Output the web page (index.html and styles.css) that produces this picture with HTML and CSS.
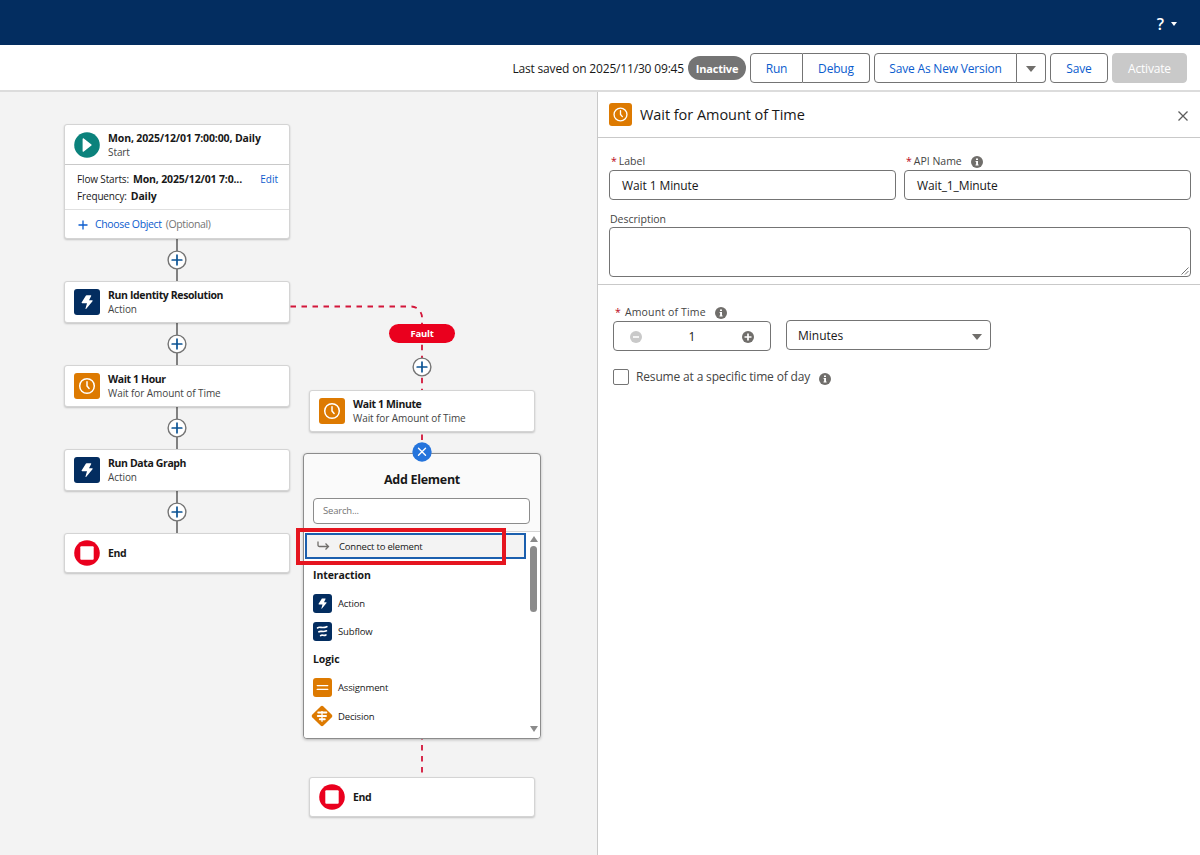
FILE: index.html
```html
<!DOCTYPE html>
<html lang="en">
<head>
  <meta charset="UTF-8">
  <title>Flow Builder</title>
  <meta name="viewport" content="width=device-width, initial-scale=1.0">
  <link rel="stylesheet" href="styles.css">
</head>
<body>
  <svg class="defs" width="0" height="0">
    <symbol id="bolt" viewBox="0 0 26 26">
      <path fill="#fff" d="M12.6 6.2h4.2c.4 0 .6.3.4.7l-2.2 4.4h3c.6 0 .8.5.5.9l-6.2 7.6c-.4.5-1 .2-.8-.4l1.5-5.2H8.2c-.5 0-.7-.4-.6-.8l4.2-6.7c.2-.3.4-.5.8-.5z"/>
    </symbol>
    <symbol id="clock" viewBox="0 0 26 26">
      <circle cx="13" cy="13" r="7.3" fill="none" stroke="#fff" stroke-width="1.5"/>
      <path fill="none" stroke="#fff" stroke-width="1.5" stroke-linecap="round" stroke-linejoin="round" d="M13 8.8V13l2.100 2.400"/>
    </symbol>
    <symbol id="info" viewBox="0 0 12 12">
      <circle cx="6" cy="6" r="6" fill="#706e6b"/>
      <path fill="#fff" d="M5 2.5h2v1.600H5zM4.600 5.100H7v3.300h.6v1H4.500v-1h.6V6h-.5z"/>
    </symbol>
    <symbol id="plus" viewBox="0 0 20 20">
      <circle cx="10" cy="10" r="8.9" fill="#fff" stroke="#747474" stroke-width="1.4"/>
      <path fill="none" stroke="#0b5394" stroke-width="1.7" stroke-linecap="round" d="M10 5.200v9.600M5.200 10h9.600"/>
    </symbol>
  </svg>

  <header class="topbar">
    <span class="help">?</span>
    <span class="help-caret"></span>
  </header>

  <div class="toolbar">
    <span class="saved">Last saved on 2025/11/30 09:45</span>
    <span class="status">Inactive</span>
    <div class="btn-group">
      <button class="btn run">Run</button>
      <button class="btn debug">Debug</button>
    </div>
    <div class="btn-group">
      <button class="btn save-as">Save As New Version</button>
      <button class="btn more"><span class="caret"></span></button>
    </div>
    <button class="btn save">Save</button>
    <button class="btn activate" disabled>Activate</button>
  </div>

  <div class="main">
    <div class="canvas">
      <svg class="edges" width="597" height="763">
        <path class="edge" d="M177 146V442"/>
        <path class="edge-fault" d="M290.500 214.500H411a11 11 0 0 1 11 11V300"/>
        <path class="edge-fault" d="M422 342.500V362"/>
        <path class="edge-fault" d="M422 642V681"/>
      </svg>

      <div class="node start">
        <div class="node-head">
          <svg class="node-icon" viewBox="0 0 26 26"><circle cx="13" cy="13" r="12.8" fill="#0b827c"/><path fill="#fff" d="M8.600 7.200c0-.8.7-1.100 1.200-.7l7.600 6c.4.3.4.8 0 1.100l-7.600 6c-.5.4-1.200.1-1.200-.7z"/></svg>
          <div class="node-text"><b>Mon, 2025/12/01 7:00:00, Daily</b><span>Start</span></div>
        </div>
        <div class="schedule">
          <div class="line"><span>Flow Starts:</span><b>Mon, 2025/12/01 7:0...</b><a class="edit">Edit</a></div>
          <div class="line"><span>Frequency:</span><b>Daily</b></div>
        </div>
        <div class="choose">
          <svg width="10" height="10" viewBox="0 0 10 10"><path stroke="#0b5cce" stroke-width="1.3" d="M5 .5v9M.5 5h9"/></svg>
          <a>Choose Object</a><span>(Optional)</span>
        </div>
      </div>

      <div class="node resolution">
        <svg class="node-icon action"><use href="#bolt"/></svg>
        <div class="node-text"><b>Run Identity Resolution</b><span>Action</span></div>
      </div>
      <div class="node wait-hour">
        <svg class="node-icon logic"><use href="#clock"/></svg>
        <div class="node-text"><b>Wait 1 Hour</b><span>Wait for Amount of Time</span></div>
      </div>
      <div class="node data-graph">
        <svg class="node-icon action"><use href="#bolt"/></svg>
        <div class="node-text"><b>Run Data Graph</b><span>Action</span></div>
      </div>
      <div class="node end end-main">
        <svg class="node-icon" viewBox="0 0 26 26"><circle cx="13" cy="13" r="12.8" fill="#ea001e"/><rect x="6.300" y="6.300" width="13.400" height="13.400" rx="1" fill="#fff"/></svg>
        <div class="node-text"><b>End</b></div>
      </div>
      <div class="node wait-minute">
        <svg class="node-icon logic"><use href="#clock"/></svg>
        <div class="node-text"><b>Wait 1 Minute</b><span>Wait for Amount of Time</span></div>
      </div>
      <div class="node end end-fault">
        <svg class="node-icon" viewBox="0 0 26 26"><circle cx="13" cy="13" r="12.8" fill="#ea001e"/><rect x="6.300" y="6.300" width="13.400" height="13.400" rx="1" fill="#fff"/></svg>
        <div class="node-text"><b>End</b></div>
      </div>

      <svg class="add add-1"><use href="#plus"/></svg>
      <svg class="add add-2"><use href="#plus"/></svg>
      <svg class="add add-3"><use href="#plus"/></svg>
      <svg class="add add-4"><use href="#plus"/></svg>
      <svg class="add add-fault"><use href="#plus"/></svg>
      <span class="fault">Fault</span>

      <div class="popover">
        <h2>Add Element</h2>
        <div class="search">Search...</div>
        <div class="list-wrap">
          <div class="list">
            <div class="connect">
              <svg width="13" height="10" viewBox="0 0 13 10"><path fill="none" stroke="#706e6b" stroke-width="1.300" d="M1 .5v3.500Q1 5.500 2.500 5.500H11.500M8.500 2.500l3 3-3 3"/></svg>
              <span>Connect to element</span>
            </div>
            <h3>Interaction</h3>
            <div class="item"><svg class="item-icon action"><use href="#bolt"/></svg>Action</div>
            <div class="item">
              <svg class="item-icon action" viewBox="0 0 20 20"><path fill="none" stroke="#fff" stroke-width="1.700" stroke-linecap="round" d="M4.800 6.200c2.500-2 4.400 1.200 9.800-1.300M6.200 10.300c2.200-1.500 4 .9 8-1M8 14.300c2-1.300 3 .6 5.600-.7"/></svg>Subflow
            </div>
            <h3 class="second">Logic</h3>
            <div class="item">
              <svg class="item-icon logic" viewBox="0 0 20 20"><path fill="none" stroke="#fff" stroke-width="1.500" stroke-linecap="round" d="M4.500 8h11M4.500 12h11"/></svg>Assignment
            </div>
            <div class="item">
              <svg class="item-icon decision" viewBox="0 0 22 22"><rect x="3.200" y="3.200" width="15.600" height="15.600" rx="2" transform="rotate(45 11 11)" fill="#dd7a01"/><path fill="none" stroke="#fff" stroke-width="1.900" stroke-linecap="round" d="M7.200 7.500h8.200M6.800 11h8.200M8.800 14.300h5"/><path stroke="#fff" stroke-width="1.300" d="M11 6v10.800"/></svg>Decision
            </div>
          </div>
          <div class="scrollbar"><span class="up"></span><span class="thumb"></span><span class="down"></span></div>
        </div>
      </div>
      <svg class="close-add" viewBox="0 0 20 20"><circle cx="10" cy="10" r="9.700" fill="#2574dc"/><path stroke="#fff" stroke-width="1.400" stroke-linecap="round" d="M6.500 6.300l7 7M13.500 6.300l-7 7"/></svg>
      <div class="highlight"></div>
    </div>

    <aside class="panel">
      <div class="panel-head">
        <svg class="panel-icon logic"><use href="#clock"/></svg>
        <h1>Wait for Amount of Time</h1>
        <svg class="close" width="10" height="10" viewBox="0 0 10 10"><path stroke="#5c5c5c" stroke-width="1.300" d="M.5.5l9 9M9.500.5l-9 9"/></svg>
      </div>
      <div class="details">
        <div class="row">
          <div class="field">
            <label><i>*</i>Label</label>
            <div class="input">Wait 1 Minute</div>
          </div>
          <div class="field">
            <label><i>*</i>API Name<svg class="info"><use href="#info"/></svg></label>
            <div class="input">Wait_1_Minute</div>
          </div>
        </div>
        <div class="field">
          <label class="desc">Description</label>
          <div class="textarea">
            <svg width="8" height="8" viewBox="0 0 8 8"><path stroke="#747474" stroke-width="1" d="M.5 7.500l7-7M4 7.500 7.500 4"/></svg>
          </div>
        </div>
      </div>
      <div class="timing">
        <label class="amount"><i>*</i>Amount of Time<svg class="info"><use href="#info"/></svg></label>
        <div class="controls">
          <div class="stepper">
            <svg width="12" height="12" viewBox="0 0 12 12"><circle cx="6" cy="6" r="6" fill="#c9c9c9"/><path stroke="#fff" stroke-width="1.600" d="M3 6h6"/></svg>
            <span>1</span>
            <svg width="12" height="12" viewBox="0 0 12 12"><circle cx="6" cy="6" r="6" fill="#706e6b"/><path stroke="#fff" stroke-width="1.700" d="M2.500 6h7M6 2.500v7"/></svg>
          </div>
          <div class="select">Minutes<span class="caret"></span></div>
        </div>
        <div class="resume">
          <span class="checkbox"></span>
          <span class="resume-text">Resume at a specific time of day</span>
          <svg class="info"><use href="#info"/></svg>
        </div>
      </div>
    </aside>
  </div>
</body>
</html>
```

FILE: styles.css
```css
* {
  box-sizing: border-box;
}
body {
  margin: 0;
  height: 855px;
  overflow: hidden;
  display: flex;
  flex-direction: column;
  font-family: "Open Sans", "Noto Sans", sans-serif;
  font-size: 12px;
  color: #181818;
  background: white;
}
h1, h2, h3 {
  margin: 0;
}
svg {
  flex: none;
}
.defs {
  position: absolute;
}
.topbar {
  height: 45px;
  flex: none;
  background: #032d60;
  display: flex;
  align-items: center;
  justify-content: flex-end;
  gap: 7px;
  padding: 2px 23px 0 0;
}
.help {
  color: white;
  font-size: 16px;
  font-weight: 600;
}
.help-caret {
  border: 3px solid transparent;
  border-top: 4px solid white;
  border-bottom: 0;
}
.toolbar {
  height: 47px;
  flex: none;
  display: flex;
  align-items: center;
  justify-content: flex-end;
  gap: 4px;
  padding-right: 13px;
  border-bottom: 2px solid #dcdcdc;
}
.saved {
  letter-spacing: -0.17px;
  padding-top: 2px;
}
.status {
  width: 58px;
  height: 24px;
  line-height: 25px;
  border-radius: 12px;
  background: #747474;
  color: white;
  font-size: 11px;
  font-weight: 700;
  letter-spacing: -0.2px;
  text-align: center;
}
.btn-group {
  display: flex;
}
.btn {
  height: 30px;
  padding: 1px 0 0;
  border: 1px solid #747474;
  border-radius: 4px;
  background: white;
  color: #0b5cce;
  font-family: inherit;
  font-size: 12px;
  letter-spacing: -0.18px;
}
.btn-group .btn:first-child {
  border-radius: 4px 0 0 4px;
}
.btn-group .btn:last-child {
  border-radius: 0 4px 4px 0;
  border-left: 0;
}
.run {
  width: 53px;
}
.debug {
  width: 67px;
}
.save-as {
  width: 143px;
}
.more {
  width: 29px;
  padding-top: 3px;
  display: flex;
  align-items: center;
  justify-content: center;
}
.save {
  width: 58px;
}
.activate {
  width: 75px;
  background: #c9c9c9;
  border-color: #c9c9c9;
  color: white;
}
.caret {
  border: 5px solid transparent;
  border-top: 6px solid #706e6b;
  border-bottom: 0;
}
.main {
  flex: 1;
  display: flex;
}
.canvas {
  position: relative;
  width: 597px;
  background: #f3f3f3;
}
.edges {
  position: absolute;
  top: 0;
  left: 0;
}
.edge {
  fill: none;
  stroke: #747474;
  stroke-width: 1.8;
}
.edge-fault {
  fill: none;
  stroke: #d3163a;
  stroke-width: 1.8;
  stroke-dasharray: 5.5 5.5;
}

/* flow nodes */
.node {
  position: absolute;
  left: 64px;
  width: 226px;
  height: 42px;
  padding-left: 10px;
  display: flex;
  align-items: center;
  gap: 8px;
  background: white;
  border: 1px solid #d4d4d4;
  border-radius: 3px;
  box-shadow: 0 1px 2px rgba(0, 0, 0, 0.2);
}
.node-icon {
  width: 26px;
  height: 26px;
  margin-left: -1px;
  border-radius: 3px;
}
.action {
  background: #032d60;
}
.logic {
  background: #dd7a01;
}
.node-text {
  display: flex;
  flex-direction: column;
  font-size: 10px;
  line-height: 14px;
}
.node-text b {
  font-size: 10.5px;
  letter-spacing: -0.38px;
}
.node-text span {
  color: #444;
  letter-spacing: -0.08px;
}
.start {
  top: 32px;
  height: 115px;
  padding: 0;
  display: block;
}
.start .node-text b {
  letter-spacing: -0.13px;
}
.node-head {
  height: 40px;
  padding-left: 10px;
  display: flex;
  align-items: center;
  gap: 8px;
  border-bottom: 1px solid #c9c9c9;
}
.schedule {
  height: 45px;
  padding: 6px 11px 0 12px;
  border-bottom: 1px solid #e0e0e0;
}
.line {
  display: flex;
  gap: 4px;
  font-size: 10px;
  line-height: 17px;
}
.line span {
  letter-spacing: -0.15px;
}
.line b {
  font-size: 10.5px;
  letter-spacing: -0.15px;
}
a {
  color: #0b5cce;
}
.edit {
  margin-left: auto;
}
.choose {
  display: flex;
  align-items: center;
  height: 27px;
  padding-left: 13px;
  font-size: 10.5px;
  letter-spacing: -0.35px;
}
.choose svg {
  margin-top: 2px;
}
.choose a {
  margin-left: 7px;
}
.choose span {
  margin-left: 4px;
  color: #747474;
}
.resolution {
  top: 189px;
}
.wait-hour {
  top: 273px;
}
.data-graph {
  top: 357px;
}
.end {
  height: 40px;
}
.end-main {
  top: 441px;
}
.wait-minute {
  left: 309px;
  top: 298px;
}
.end-fault {
  left: 309px;
  top: 685px;
}
.add {
  position: absolute;
  left: 167px;
  width: 20px;
  height: 20px;
}
.add-1 {
  top: 158px;
}
.add-2 {
  top: 242px;
}
.add-3 {
  top: 326px;
}
.add-4 {
  top: 410px;
}
.add-fault {
  left: 412px;
  top: 265px;
}
.fault {
  position: absolute;
  left: 389px;
  top: 232px;
  width: 66px;
  height: 19px;
  line-height: 20px;
  border-radius: 10px;
  background: #ea001e;
  color: white;
  font-size: 9.5px;
  font-weight: 700;
  letter-spacing: -0.2px;
  text-align: center;
}

/* add element menu */
.popover {
  position: absolute;
  left: 303px;
  top: 361px;
  width: 238px;
  height: 286px;
  display: flex;
  flex-direction: column;
  background: #fafafa;
  border: 1px solid #8c8c8c;
  border-radius: 4px;
  box-shadow: 0 1px 3px rgba(0, 0, 0, 0.25);
  overflow: hidden;
}
.popover h2 {
  margin-top: 16px;
  font-size: 12.5px;
  line-height: 20px;
  letter-spacing: -0.3px;
  text-align: center;
}
.search {
  height: 26px;
  margin: 8px 10px 7px 9px;
  padding-left: 9px;
  line-height: 24px;
  font-size: 9.5px;
  letter-spacing: -0.2px;
  color: #747474;
  background: white;
  border: 1px solid #8c8c8c;
  border-radius: 4px;
}
.list-wrap {
  flex: 1;
  display: flex;
  background: white;
  border-top: 1px solid #d4d4d4;
}
.list {
  width: 224px;
}
.connect {
  height: 26px;
  margin: 1px 2px 0 1px;
  padding-left: 10px;
  display: flex;
  align-items: center;
  gap: 9px;
  font-size: 9.5px;
  letter-spacing: -0.2px;
  background: #f3f3f3;
  border: 2px solid #1b5fae;
}
.list h3 {
  height: 30px;
  padding-left: 9px;
  font-size: 10.5px;
  line-height: 32px;
  letter-spacing: -0.1px;
}
.list .second {
  height: 28px;
  line-height: 27px;
}
.item {
  height: 28.4px;
  padding-left: 9px;
  display: flex;
  align-items: center;
  gap: 6px;
  font-size: 9.5px;
  letter-spacing: -0.15px;
}
.item-icon {
  width: 19px;
  height: 19px;
  border-radius: 3px;
}
.decision {
  width: 22px;
  height: 22px;
  margin: 0 -1px 0 -2px;
}
.scrollbar {
  width: 11px;
  display: flex;
  flex-direction: column;
  align-items: center;
  padding: 4px 0 6px;
}
.up {
  border: 4px solid transparent;
  border-bottom: 6px solid #8b8b8b;
  border-top: 0;
}
.thumb {
  width: 7px;
  height: 66px;
  margin-top: 4px;
  border-radius: 4px;
  background: #8b8b8b;
}
.down {
  margin-top: auto;
  border: 4px solid transparent;
  border-top: 6px solid #8b8b8b;
  border-bottom: 0;
}
.close-add {
  position: absolute;
  left: 412px;
  top: 350px;
  width: 20px;
  height: 20px;
}
.highlight {
  position: absolute;
  left: 296px;
  top: 436px;
  width: 210px;
  height: 37px;
  border: 4px solid #e5151f;
}

/* property panel */
.panel {
  flex: 1;
  border-left: 1px solid #c9c9c9;
}
.panel-head {
  height: 46px;
  padding: 0 12px 0 11px;
  display: flex;
  align-items: center;
  border-bottom: 1px solid #c9c9c9;
}
.panel-icon {
  width: 23px;
  height: 23px;
  border-radius: 3px;
}
.panel h1 {
  margin-left: 8px;
  font-size: 14.5px;
  font-weight: 400;
  letter-spacing: -0.05px;
}
.close {
  margin: 3px 0 0 auto;
}
.details {
  height: 147px;
  padding: 14px 9px 0 11px;
  border-bottom: 1px solid #c9c9c9;
}
.row {
  display: flex;
  gap: 8px;
}
.row .field {
  flex: 1;
}
label {
  height: 18px;
  padding: 0 0 0 2px;
  display: flex;
  align-items: center;
  font-size: 10.5px;
  color: #444;
}
label i {
  margin-right: 2px;
  font-style: normal;
  color: #ba0517;
}
.info {
  width: 12px;
  height: 12px;
  margin: 2px 0 0 9px;
}
.input {
  height: 30px;
  padding-left: 12px;
  line-height: 29px;
  letter-spacing: -0.1px;
  border: 1px solid #747474;
  border-radius: 4px;
}
.desc {
  height: 27px;
  padding: 10px 0 0 1px;
}
.textarea {
  height: 50px;
  padding: 0 1px 1px 0;
  display: flex;
  align-items: flex-end;
  justify-content: flex-end;
  border: 1px solid #747474;
  border-radius: 4px;
}
.timing {
  padding: 18px 0 0 15px;
}
.amount {
  letter-spacing: 0.15px;
}
.amount i {
  margin-right: 4px;
}
.controls {
  display: flex;
  gap: 15px;
  margin-top: -1px;
}
.stepper {
  width: 158px;
  height: 30px;
  margin-top: 1px;
  padding: 1px 16px 0;
  display: flex;
  align-items: center;
  justify-content: space-between;
  border: 1px solid #747474;
  border-radius: 4px;
}
.select {
  width: 205px;
  height: 30px;
  padding: 0 8px 0 11px;
  display: flex;
  align-items: center;
  justify-content: space-between;
  border: 1px solid #747474;
  border-radius: 4px;
}
.select .caret {
  margin-top: 3px;
}
.resume {
  display: flex;
  align-items: center;
  margin-top: 17px;
  color: #444;
}
.checkbox {
  width: 16px;
  height: 16px;
  border: 1px solid #747474;
  border-radius: 2px;
}
.resume-text {
  margin-left: 7px;
  letter-spacing: -0.16px;
}
.resume .info {
  margin-top: 4px;
}
```
